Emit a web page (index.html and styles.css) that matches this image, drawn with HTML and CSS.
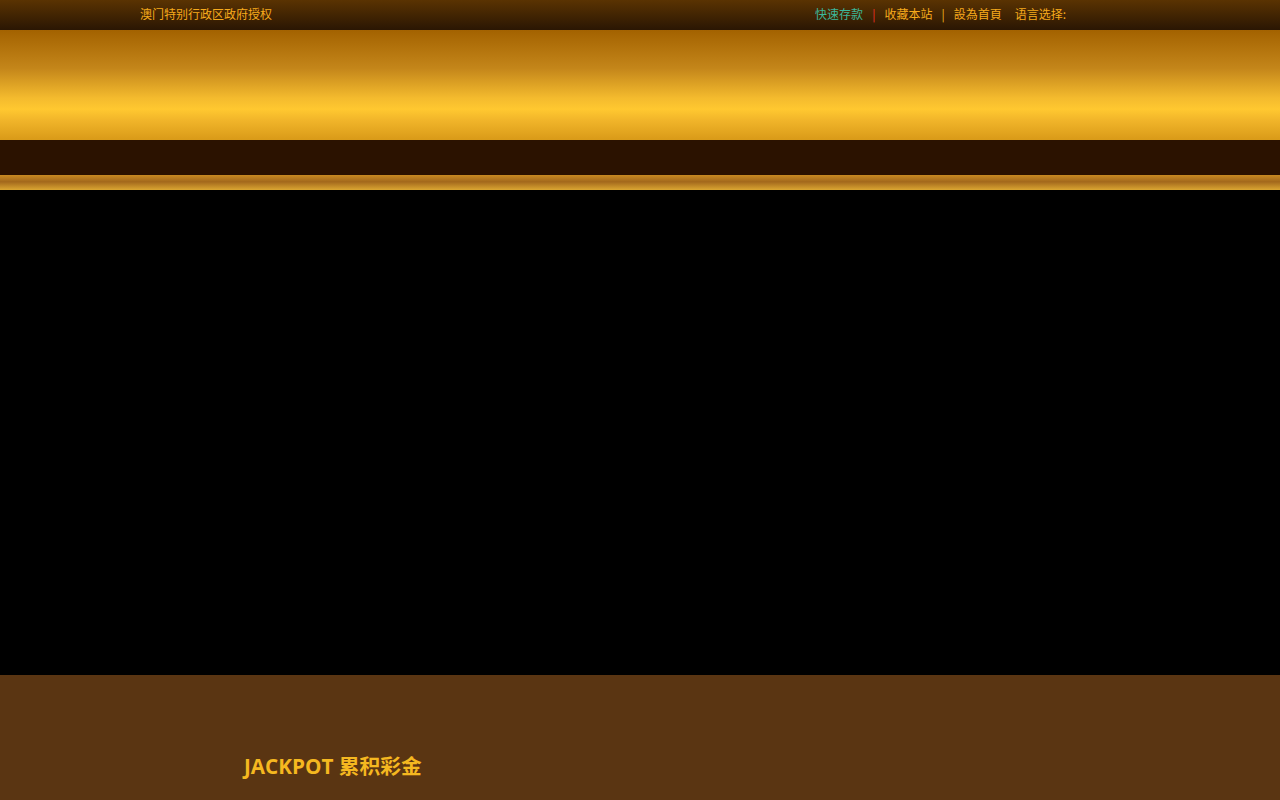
FILE: index.html
```html
<!DOCTYPE html>
<html lang="zh-CN">
<head>
    <meta charset="UTF-8">
    <meta name="viewport" content="width=device-width, initial-scale=1.0">
    <title>澳门特别行政区政府授权</title>
    <link rel="stylesheet" href="styles.css">
</head>
<body>

    <!-- Top Bar -->
    <div class="top-bar">
        <div class="wrap">
            <span class="licence">澳门特别行政区政府授权</span>
            <div class="top-links">
                <a href="#" class="deposit">快速存款</a>
                <span class="sep">|</span>
                <a href="#">收藏本站</a>
                <span class="sep sep-gold">|</span>
                <a href="#">設為首頁</a>
                <span class="lang">语言选择:</span>
            </div>
        </div>
    </div>

    <!-- Header -->
    <header class="header"></header>

    <!-- Navigation -->
    <nav class="nav"></nav>
    <div class="nav-strip"></div>

    <!-- Banner -->
    <div class="banner"></div>

    <!-- Jackpot -->
    <section class="jackpot">
        <h2>JACKPOT 累积彩金</h2>
    </section>

</body>
</html>
```

FILE: styles.css
```css
/* General Reset */
* {
    margin: 0;
    padding: 0;
    box-sizing: border-box;
}

body {
    font-family: "Noto Sans CJK SC", "Noto Sans", sans-serif;
    background-color: #000;
    color: #f0a020;
}

a {
    text-decoration: none;
}

/* Top Bar */
.top-bar {
    height: 30px;
    background: linear-gradient(to bottom, #5a3302, #2a1603);
    font-size: 12px;
}

.top-bar .wrap {
    width: 1000px;
    height: 30px;
    margin: 0 auto;
    padding: 0 74px 4px 0;
    display: flex;
    justify-content: space-between;
    align-items: center;
}

.licence {
    color: #f7aa1c;
}

.top-links {
    display: flex;
    align-items: center;
}

.top-links a {
    color: #f7aa1c;
}

.top-links a.deposit {
    color: #3cb89a;
}

.sep {
    color: #f0302a;
    margin: 0 9px;
}

.sep-gold {
    color: #f5b81c;
}

.lang {
    margin-left: 13px;
    color: #f7aa1c;
}

/* Header */
.header {
    height: 110px;
    background: linear-gradient(to bottom, #a36200 0%, #c4861a 35%, #f4bb2e 62%, #ffc830 72%, #f1b52a 82%, #d99a18 100%);
}

/* Navigation */
.nav {
    height: 35px;
    background-color: #2b1200;
}

.nav-strip {
    height: 15px;
    background: linear-gradient(to bottom, #c88a22, #a3681c 45%, #dba632);
}

/* Banner */
.banner {
    height: 485px;
    background-color: #000;
}

/* Jackpot */
.jackpot {
    height: 125px;
    background-color: #5a3512;
    padding: 76px 0 0 244px;
}

.jackpot h2 {
    font-family: "Open Sans", "Noto Sans CJK SC", sans-serif;
    font-size: 20.7px;
    font-weight: bold;
    color: #f5b820;
    line-height: 30px;
}
```
